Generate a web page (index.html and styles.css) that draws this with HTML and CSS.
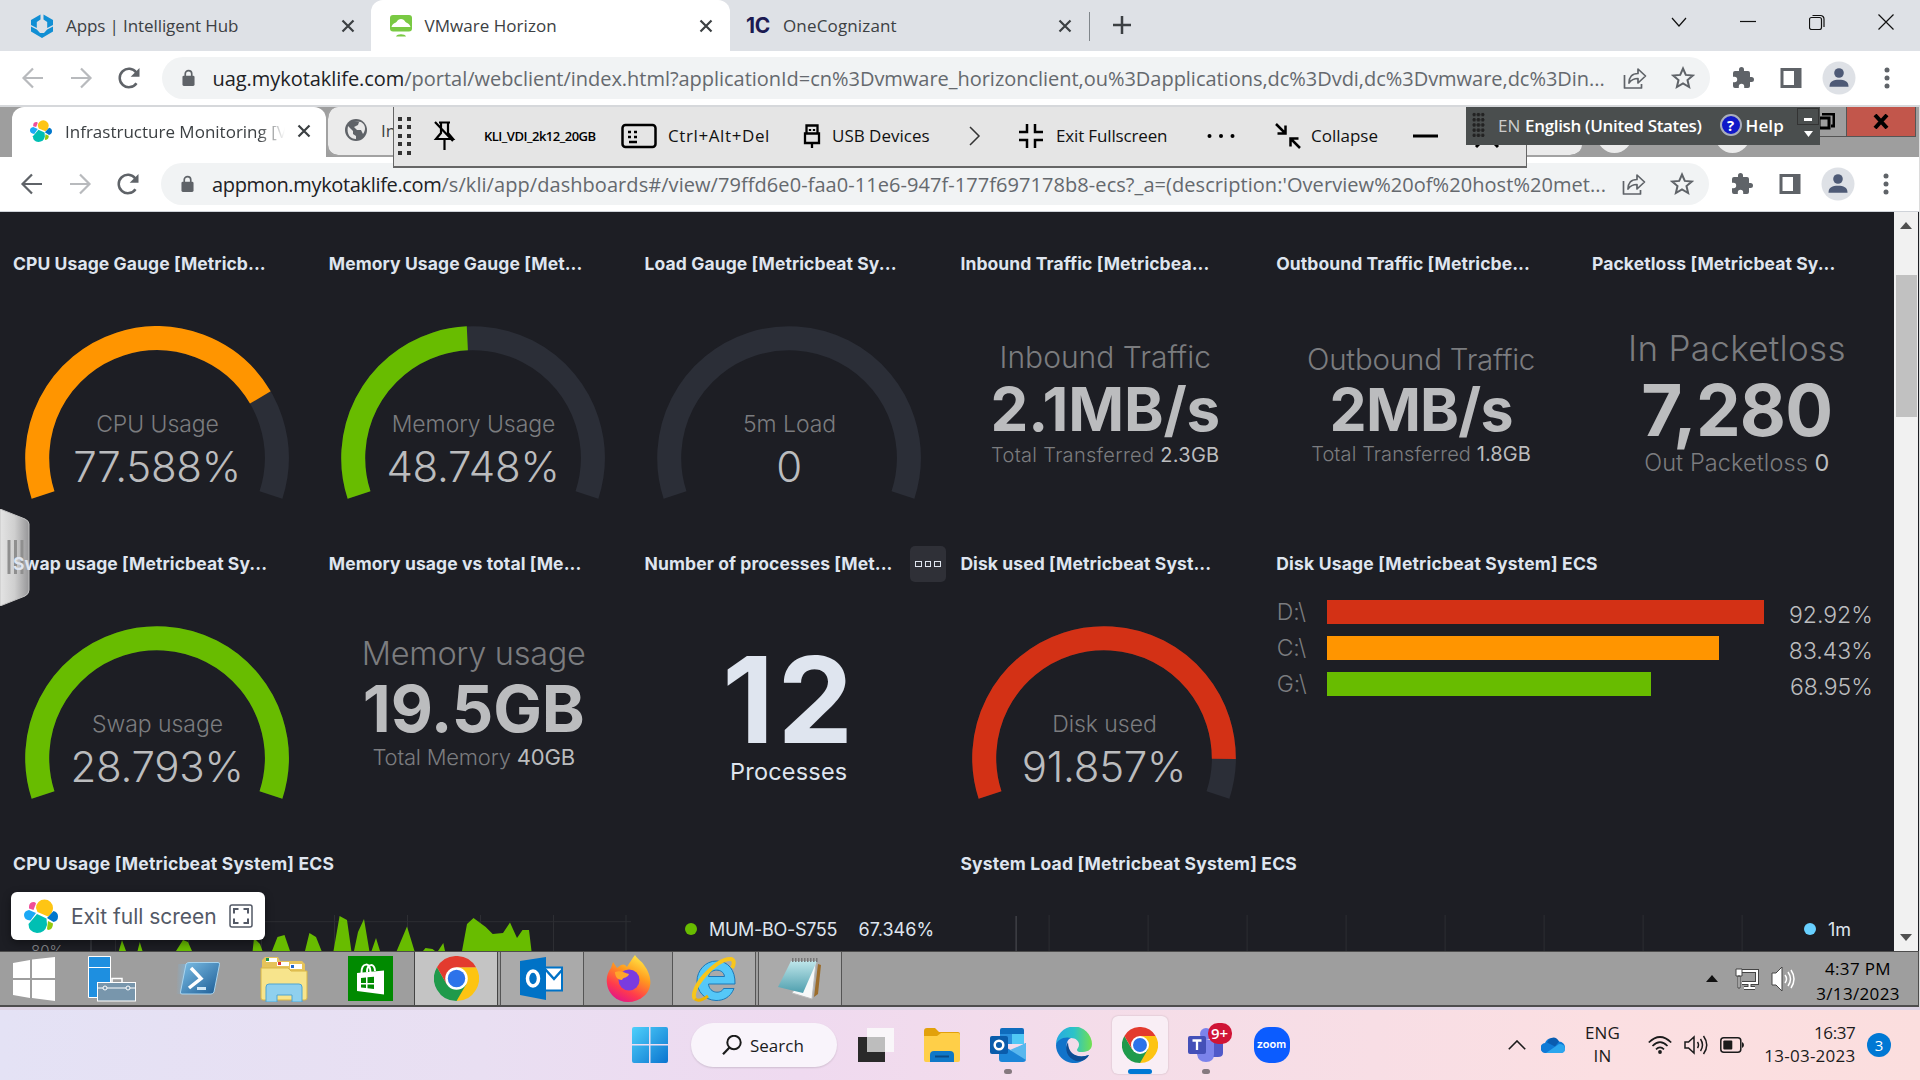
FILE: index.html
```html
<!DOCTYPE html>
<html lang="en">
<head>
<meta charset="utf-8">
<title>VMware Horizon</title>
<link rel="stylesheet" href="styles.css">
</head>
<body>
<svg class="defs" width="0" height="0">
  <symbol id="back" viewBox="0 0 24 24"><path d="M22 12H3M12 2.5L2.5 12l9.5 9.500" fill="none" stroke="currentColor" stroke-width="2.200"/></symbol>
  <symbol id="forward" viewBox="0 0 24 24"><path d="M2 12h19M12 2.500l9.500 9.500-9.500 9.500" fill="none" stroke="currentColor" stroke-width="2.200"/></symbol>
  <symbol id="reload" viewBox="0 0 24 24"><path d="M19.500 17.200A9.200 9.200 0 1 1 19.300 6.500" fill="none" stroke="currentColor" stroke-width="2.500"/><path d="M22.500 2v8.800h-8.800z" fill="currentColor"/></symbol>
  <symbol id="lock" viewBox="0 0 14 18"><rect x="0.500" y="6.500" width="13" height="11" rx="1.500" fill="currentColor"/><path d="M3.500 7V4.500a3.500 3.500 0 0 1 7 0V7" fill="none" stroke="currentColor" stroke-width="1.800"/></symbol>
  <symbol id="share" viewBox="0 0 24 24"><path d="M1.500 9v13h17v-4M6 17c0-6 3-9.500 9-9.500V3l7.500 7-7.500 7v-4.500c-4 0-6.500 1-9 4.500z" fill="none" stroke="currentColor" stroke-width="1.700" stroke-linejoin="round"/></symbol>
  <symbol id="star" viewBox="0 0 24 24"><path d="M12 2.500l2.800 6.400 7 .600-5.300 4.600 1.600 6.900-6.100-3.700-6.100 3.700 1.600-6.900L2.200 9.500l7-.600z" fill="none" stroke="currentColor" stroke-width="2"/></symbol>
  <symbol id="puzzle" viewBox="0 0 24 24"><path d="M20.500 11H19V7a2 2 0 0 0-2-2h-4V3.500a2.500 2.500 0 0 0-5 0V5H4a2 2 0 0 0-2 2v3.800h1.500a2.700 2.700 0 0 1 0 5.400H2V20a2 2 0 0 0 2 2h3.800v-1.500a2.700 2.700 0 0 1 5.400 0V22H17a2 2 0 0 0 2-2v-4h1.500a2.500 2.500 0 0 0 0-5z" fill="currentColor"/></symbol>
  <symbol id="panel" viewBox="0 0 24 24"><path d="M1.500 2h21v20h-21zM4.500 5v14H15V5z" fill="currentColor" fill-rule="evenodd"/></symbol>
  <symbol id="avatar" viewBox="0 0 34 34"><circle cx="17" cy="17" r="16.500" fill="#dee1e6"/><circle cx="17" cy="12" r="4.800" fill="#4e5a76"/><path d="M7.500 25.800c0-5.500 4-7 9.500-7s9.500 1.500 9.500 7z" fill="#4e5a76"/></symbol>
  <symbol id="kebab" viewBox="0 0 24 24"><g fill="currentColor"><circle cx="12" cy="4" r="2.500"/><circle cx="12" cy="12" r="2.500"/><circle cx="12" cy="20" r="2.500"/></g></symbol>
  <symbol id="x" viewBox="0 0 14 14"><path d="M1.500 1.500l11 11m0-11l-11 11" stroke="currentColor" stroke-width="2.200"/></symbol>
  <symbol id="elastic" viewBox="0 0 34 34"><path d="M12 9a8.500 8.500 0 0 1 17 0q0 5-5 8.500L13.500 13z" fill="#fec514"/><path d="M5 8q0-5 5-5 1.500 0 2 1.500L9.500 11 5 9.500z" fill="#f04e98"/><path d="M5 11l7 3-5.500 7.500Q0 21 0 16q0-4 5-5z" fill="#1ba9f5"/><path d="M13 15l9.500 4.500L23 26q-2 8-10 8-8.500-1-8.500-9z" fill="#00bfb3"/><path d="M29.500 12q4.500 1 4.500 5.500T29.500 23l-6.500-4z" fill="#0077cc"/><path d="M24 22l5 2.500q0 6-5 6.500l-1-1z" fill="#93c90e"/></symbol>
  <symbol id="chrome" viewBox="0 0 48 48"><path d="M24 24V12h20.800A24 24 0 0 1 24 48z" fill="#fdc412"/><path d="M24 24l10.400 6L24 48A24 24 0 0 1 3.200 12l10.400 18z" fill="#1f9a4b"/><path d="M3.200 12L13.600 30 24 24 24 12h20.800A24 24 0 0 0 3.200 12z" fill="#e33b2e"/><circle cx="24" cy="24" r="12" fill="#fff"/><circle cx="24" cy="24" r="9.300" fill="#2d73ea"/></symbol>
</svg>

<header class="tabstrip">
  <div class="tab tab--hub">
    <svg width="22" height="24" viewBox="0 0 22 24"><path d="M9.500.500v5L5.800 8v6L0 11V6zM12.500.500v5L16.200 8v6l5.800-3V6zM0 12.500l5.800 3L9 19h4l3.200-3.500 5.800-3v5L11 24 0 17.500z" fill="#118fd4"/></svg>
    <span class="tab-title t-hub">Apps | Intelligent Hub</span>
    <svg class="tab-close" width="14" height="14"><use href="#x"/></svg>
  </div>
  <div class="tab tab--active">
    <svg width="22" height="22" viewBox="0 0 22 22"><rect width="22" height="16.500" rx="3" fill="#79c943"/><path d="M1.500 12c1-4 4-4 5-5 2-4 7-4 9 0 1 1 4 1 5 5z" fill="#fff"/><path d="M6 21.500c1-3 9-3 10 0z" fill="#79c943"/></svg>
    <span class="tab-title t-vm">VMware Horizon</span>
    <svg class="tab-close" width="14" height="14"><use href="#x"/></svg>
  </div>
  <div class="tab tab--cog">
    <b class="cog">1C</b>
    <span class="tab-title t-one">OneCognizant</span>
    <svg class="tab-close" width="14" height="14"><use href="#x"/></svg>
  </div>
  <svg class="newtab" width="18" height="18" viewBox="0 0 18 18"><path d="M9 0v18M0 9h18" stroke="#3c4043" stroke-width="2.500"/></svg>
  <div class="win-controls">
    <svg width="16" height="16" viewBox="0 0 16 16"><path d="M1 4l7 8 7-8"/></svg>
    <svg width="16" height="16" viewBox="0 0 16 16"><path d="M0 7.500h16"/></svg>
    <svg width="16" height="16" viewBox="0 0 16 16"><rect x=".5" y="3.500" width="12" height="12" rx="2"/><path d="M3.500 1.500h8a3.500 3.500 0 0 1 3.500 3.500v8"/></svg>
    <svg width="16" height="16" viewBox="0 0 16 16"><path d="M.5.500l15 15m0-15l-15 15"/></svg>
  </div>
</header>

<nav class="toolbar">
  <div class="nav-icons"><svg class="dim"><use href="#back"/></svg><svg class="dim"><use href="#forward"/></svg><svg><use href="#reload"/></svg></div>
  <div class="omnibox">
    <svg class="lock"><use href="#lock"/></svg>
    <span class="url"><span class="host host-uag">uag.mykotaklife.com</span><span class="path-uag">/portal/webclient/index.html?applicationId=cn%3Dvmware_horizonclient,ou%3Dapplications,dc%3Dvdi,dc%3Dvmware,dc%3Din...</span></span>
    <svg><use href="#share"/></svg><svg><use href="#star"/></svg>
  </div>
  <div class="nav-actions"><svg><use href="#puzzle"/></svg><svg><use href="#panel"/></svg><svg class="avatar"><use href="#avatar"/></svg><svg><use href="#kebab"/></svg></div>
</nav>

<main class="remote">
  <div class="rtabs">
    <div class="rtab rtab--active">
      <svg width="22" height="22"><use href="#elastic"/></svg>
      <span class="tab-title t-infra">Infrastructure Monitoring [V</span>
      <svg class="tab-close" width="14" height="14"><use href="#x"/></svg>
    </div>
    <div class="rtab rtab--rest">
      <svg width="22" height="22" viewBox="0 0 22 22"><circle cx="11" cy="11" r="11" fill="#5f6368"/><path d="M3 7l5 5v3l3 2v3C6 20 1 16 3 7zM9 2l5 1-1 3-4 2 3 3 4 0 2 4c3-4 3-9-2-12z" fill="#e8e8e8"/></svg>
      <span class="tab-title">In</span>
    </div>
    <div class="rtab-tools"><i class="round"></i><i class="round"></i></div>
    <div class="rwin"><span class="rwin-restore"><svg width="18" height="18" viewBox="0 0 18 18"><path d="M5 1h12v12h-3M2 5h10v10H2z" fill="none" stroke="#000" stroke-width="3"/></svg></span><span class="rwin-close"><svg width="16" height="15" viewBox="0 0 16 15"><path d="M2 1l12 13M14 1L2 14" stroke="#000" stroke-width="4"/></svg></span></div>
  </div>

  <nav class="toolbar toolbar--remote">
    <div class="nav-icons"><svg><use href="#back"/></svg><svg class="dim"><use href="#forward"/></svg><svg><use href="#reload"/></svg></div>
    <div class="omnibox">
      <svg class="lock"><use href="#lock"/></svg>
      <span class="url"><span class="host host-app">appmon.mykotaklife.com</span><span class="path-app">/s/kli/app/dashboards#/view/79ffd6e0-faa0-11e6-947f-177f697178b8-ecs?_a=(description:'Overview%20of%20host%20met...</span></span>
      <svg><use href="#share"/></svg><svg><use href="#star"/></svg>
    </div>
    <div class="nav-actions"><svg><use href="#puzzle"/></svg><svg><use href="#panel"/></svg><svg class="avatar"><use href="#avatar"/></svg><svg><use href="#kebab"/></svg></div>
  </nav>

  <div class="page">
    <section class="dashboard">
      <article class="panel"><h2>CPU Usage Gauge [Metricb...</h2>
        <svg class="gauge" viewBox="0 0 264 176"><circle class="track" pathLength="360"/><circle class="arc orange" pathLength="360" stroke-dasharray="167.600 360"/><text class="g-label" x="132.500" y="106">CPU Usage</text><text class="g-value" x="132" y="156">77.588%</text></svg></article>
      <article class="panel"><h2>Memory Usage Gauge [Met...</h2>
        <svg class="gauge" viewBox="0 0 264 176"><circle class="track" pathLength="360"/><circle class="arc green" pathLength="360" stroke-dasharray="105.300 360"/><text class="g-label" x="132.500" y="106">Memory Usage</text><text class="g-value" x="132" y="156">48.748%</text></svg></article>
      <article class="panel"><h2>Load Gauge [Metricbeat Sy...</h2>
        <svg class="gauge" viewBox="0 0 264 176"><circle class="track" pathLength="360"/><text class="g-label" x="132.500" y="106">5m Load</text><text class="g-value" x="132" y="156">0</text></svg></article>
      <article class="panel"><h2>Inbound Traffic [Metricbea...</h2>
        <div class="metric m-in"><span class="m-label">Inbound Traffic</span><b class="m-value">2.1MB/s</b><span class="m-sub">Total Transferred <em>2.3GB</em></span></div></article>
      <article class="panel"><h2>Outbound Traffic [Metricbe...</h2>
        <div class="metric m-out"><span class="m-label">Outbound Traffic</span><b class="m-value">2MB/s</b><span class="m-sub">Total Transferred <em>1.8GB</em></span></div></article>
      <article class="panel"><h2>Packetloss [Metricbeat Sy...</h2>
        <div class="metric m-loss"><span class="m-label">In Packetloss</span><b class="m-value">7,280</b><span class="m-sub">Out Packetloss <em>0</em></span></div></article>

      <article class="panel"><h2>Swap usage [Metricbeat Sy...</h2>
        <svg class="gauge" viewBox="0 0 264 176"><circle class="track" pathLength="360"/><circle class="arc green" pathLength="360" stroke-dasharray="216 360"/><text class="g-label" x="132.500" y="106">Swap usage</text><text class="g-value" x="132" y="156">28.793%</text></svg></article>
      <article class="panel"><h2>Memory usage vs total [Me...</h2>
        <div class="metric m-mem"><span class="m-label">Memory usage</span><b class="m-value">19.5GB</b><span class="m-sub">Total Memory <em>40GB</em></span></div></article>
      <article class="panel"><h2>Number of processes [Met...</h2>
        <button class="panel-menu"><i></i><i></i><i></i></button>
        <div class="metric m-proc"><b class="m-value">12</b><span class="m-sub">Processes</span></div></article>
      <article class="panel"><h2>Disk used [Metricbeat Syst...</h2>
        <svg class="gauge" viewBox="0 0 264 176"><circle class="track" pathLength="360"/><circle class="arc red" pathLength="360" stroke-dasharray="198.400 360"/><text class="g-label" x="132.500" y="106">Disk used</text><text class="g-value" x="132" y="156">91.857%</text></svg></article>
      <article class="panel panel--2"><h2 class="full">Disk Usage [Metricbeat System] ECS</h2>
        <ul class="disks">
          <li><span>D:\</span><div class="bar"><i class="bg-red" style="width:100%"></i></div><em>92.92%</em></li>
          <li><span>C:\</span><div class="bar"><i class="bg-orange" style="width:89.8%"></i></div><em>83.43%</em></li>
          <li><span>G:\</span><div class="bar"><i class="bg-green" style="width:74.2%"></i></div><em>68.95%</em></li>
        </ul></article>

      <article class="panel panel--3"><h2 class="full">CPU Usage [Metricbeat System] ECS</h2>
        <div class="chart">
          <svg width="640" height="36" viewBox="0 915 640 36"><path d="M115.500 915v36M188.500 915v36M261.500 915v36M334.500 915v36M407.500 915v36M480.500 915v36M553.500 915v36M626 915v36M91 921.700H631" stroke="#2d2e33" fill="none"/><path d="M91 915v36" stroke="#45464c"/>
          <path fill="#68bc00" d="M118.800 951L122 940l4 11zM137.500 951l2.300-9 2.700 9zM176 951l7-11 5 2 4 9zM252.600 951l1.400-13 6 6 2.500 7zM272 951l5.500-14 7-2 5.500 16zM305 951l4.400-18 6.600 4 5.600 14zM333.500 951l6.100-35 7.400 4 4.400 31zM354 951l4-19 6-13 5.400 32zM371.500 951l4.500-13 4 13zM396.700 951L407 926.500l7.500 24.500zM423 951l2.500-3 7 1 2.500 2zM438 951l5.300-8 1.700 8zM462 951l5-27 6.500-6L485.700 927l7 7 10.300-1 7-10.500 7 15.500 5.500-8h6.500l2.500 21z"/>
          <text x="31" y="956" class="axis">80%</text></svg>
          <div class="legend legend--cpu"><i class="bg-green"></i><span>MUM-BO-S755</span><em>67.346%</em></div>
        </div></article>
      <article class="panel panel--3"><h2 class="full">System Load [Metricbeat System] ECS</h2>
        <div class="chart">
          <svg width="848" height="36" viewBox="947.400 915 848 36"><path d="M1049.500 915v36M1148.500 915v36M1247.500 915v36M1346.500 915v36M1445.500 915v36M1544.500 915v36M1643.500 915v36M1742.500 915v36" stroke="#2d2e33" fill="none"/><path d="M1016.500 916v35" stroke="#505157"/></svg>
          <div class="legend legend--load"><i></i><span>1m</span></div>
        </div></article>
    </section>
    <div class="scrollbar"><svg width="12" height="7" viewBox="0 0 12 7"><path d="M0 7h12L6 0z" fill="#505050"/></svg><i class="thumb"></i><svg width="12" height="7" viewBox="0 0 12 7"><path d="M0 0h12L6 7z" fill="#505050"/></svg></div>

    <svg class="handle" width="30" height="97" viewBox="0 0 30 97"><defs><linearGradient id="hg"><stop offset="0" stop-color="#e4e4e4"/><stop offset=".5" stop-color="#cfcfcf"/><stop offset="1" stop-color="#969698"/></linearGradient></defs><path d="M0 0l25 10q4 2 4 5v66q0 4-4 6L0 97z" fill="url(#hg)" stroke="#c4c4c4"/><path d="M9 31v34M15.500 31v34M22 31v34" stroke="#8f8f8f" stroke-width="3"/></svg>
    <button class="exit-full"><svg width="34" height="34"><use href="#elastic"/></svg><span>Exit full screen</span><svg width="24" height="24" viewBox="0 0 24 24" fill="none" stroke="#535966"><rect x="1" y="1" width="22" height="22" rx="2" stroke-width="1.500"/><path d="M5 9.500V5h4.500M14.500 5H19v4.500M19 14.500V19h-4.500M9.500 19H5v-4.500" stroke-width="2"/></svg></button>
  </div>

  <footer class="rtaskbar">
    <span class="rapp rapp--start"><svg width="44" height="44" viewBox="0 0 44 44"><path d="M1 6l17-3v18H1zM20 2.500L43 0v21H20zM1 23h17v18L1 38zM20 23h23v21l-23-3z" fill="#fff"/></svg></span>
    <span class="rapp"><svg width="48" height="46" viewBox="0 0 48 46"><path d="M.5.500h22v41H.500z" fill="#1e8fe0" stroke="#fff"/><path d="M0 11.500h22" stroke="#fff"/><path d="M24 26v-3.500h10V26" fill="none" stroke="#fff" stroke-width="1.500"/><rect x="9.500" y="26.500" width="38" height="18.500" fill="#7896ac" stroke="#fff"/><path d="M9 32h38" stroke="#fff"/><circle cx="17" cy="32" r="2" fill="#7896ac" stroke="#fff"/><circle cx="40" cy="32" r="2" fill="#7896ac" stroke="#fff"/></svg></span>
    <span class="rapp"><svg width="44" height="34" viewBox="0 0 44 34"><defs><linearGradient id="ps" x2="1" y2="1"><stop stop-color="#7dbfe6"/><stop offset="1" stop-color="#1c5c95"/></linearGradient><linearGradient id="pt"><stop stop-color="#7db4da" stop-opacity="0"/><stop offset="1" stop-color="#7db4da"/></linearGradient></defs><path d="M2 2h12l-6 30H0z" fill="url(#pt)"/><path d="M10 2q1-1.500 3-1.500h29q2 0 1.500 2L38 30q-1 2-3 2H6q-2 0-1.500-2z" fill="url(#ps)" stroke="#a8d4ee"/><path d="M15 6l10 10.500L13 26" fill="none" stroke="#fff" stroke-width="3.500"/><path d="M21 26.500h9" stroke="#cfe6f5" stroke-width="3"/></svg></span>
    <span class="rapp"><svg width="48" height="46" viewBox="0 0 48 46"><path d="M2 4l3-3h13l2 4h22l3 3v30H2z" fill="#e6c35a"/><path d="M6 2h11v4H6zM17 6h12v4H17zM30 8h12v5H30z" fill="#fff"/><path d="M6 2h3v3H6z" fill="#1a9a48"/><path d="M18 6h3v3h-3z" fill="#d33"/><path d="M31 9h3v3h-3z" fill="#26c"/><path d="M1 12h27l3 3h16v27q0 2-2 2H3q-2 0-2-2z" fill="#f7e48c" stroke="#d9b645"/><path d="M6 46V31q0-3 3-3h30q3 0 3 3v15H32v-7H17v7z" fill="#8fd0ee" stroke="#4fa4d2"/></svg></span>
    <span class="rapp"><svg width="45" height="45" viewBox="0 0 45 45"><path d="M0 0h45v45H0z" fill="#008a00"/><path d="M9 17l27-2.500v24L9 35z" fill="#fff"/><path d="M13.500 17c0-11 9-11 9-1M19 16c0-9 8-9 8-1" fill="none" stroke="#fff" stroke-width="2"/><path d="M13 22l5-.500V27h-5zM19.500 21.300l6.500-.600V27h-6.500zM13 28.500h5V32l-5-.600zM19.500 28.500H26V33l-6.500-.800z" fill="#008a00"/></svg></span>
    <span class="rapp rapp--active"><svg width="45" height="45"><use href="#chrome"/></svg></span>
    <span class="rapp rapp--open"><svg width="44" height="44" viewBox="0 0 44 44"><path d="M25 10.500h17v23H25z" fill="#fff" stroke="#0072c6" stroke-width="2"/><path d="M25 12l9 10 8-9" fill="none" stroke="#0072c6" stroke-width="2.500"/><path d="M0 4l26-4v43L0 38z" fill="#0072c6"/><ellipse cx="13" cy="21.500" rx="5.500" ry="7.500" fill="none" stroke="#fff" stroke-width="3.500"/></svg></span>
    <span class="rapp"><svg width="45" height="47" viewBox="0 0 45 47"><defs><linearGradient id="ff" x1=".8" y1="0" x2=".3" y2="1"><stop stop-color="#fff04a"/><stop offset=".4" stop-color="#ff9a1e"/><stop offset=".75" stop-color="#ff3b4c"/><stop offset="1" stop-color="#e31587"/></linearGradient></defs><path d="M29 0c3 5 7 6 9 10 9 12 8 24 0 31-9 8-23 8-31 0C-1 33-1 20 5 13l2-6 4 6 4-3c2-1 4-1 6 2 3-5 5-8 8-12z" fill="url(#ff)"/><circle cx="23" cy="25" r="10.500" fill="#7a3be0"/><path d="M9 17c6-2 9 1 14 2-1 4-6 3-7 6-4 0-7-3-7-8z" fill="#ffa52a"/></svg></span>
    <span class="rapp rapp--open"><svg width="46" height="46" viewBox="0 0 46 46"><path d="M44 28H17.500c1 10 13 10 15 4.500H43C39 42 32 44.500 25 44.500 13 44 6 35 6 25S14 5 25.500 5 44.500 14 44 28zM17.500 20.500h16c-1-8.500-14.500-8.500-16 0z" fill="#55c8f8" stroke="#1c78b8" fill-rule="evenodd"/><path d="M4 43C-3 35 24 2 40 3c4 1 3 6 1 9" fill="none" stroke="#f8c61c" stroke-width="4"/><path d="M4 43c4 3 9 0 13-3" fill="none" stroke="#f0b400" stroke-width="3"/></svg></span>
    <span class="rapp rapp--open"><svg width="44" height="44" viewBox="0 0 44 44"><defs><linearGradient id="np" x2="0" y2="1"><stop stop-color="#bfe6ea"/><stop offset="1" stop-color="#4f9fae"/></linearGradient></defs><path d="M40 7l3 1-3 29-4 3z" fill="#9c6d2c"/><path d="M38 6l-4 36-20-6 20-30z" fill="#f6f8f8" stroke="#bbb"/><path d="M13 4h26L25 36 0 30z" fill="url(#np)"/><path d="M14 3h26" stroke="#777" stroke-width="4" stroke-dasharray="1.500 1.500"/></svg></span>
    <div class="rtray">
      <svg width="12" height="7" viewBox="0 0 12 7"><path d="M0 7h12L6 0z" fill="#111"/></svg>
      <svg class="net" width="24" height="24" viewBox="0 0 24 24"><path d="M7 4h15v12H7M14.500 16v4.500M9 21h11" fill="none" stroke="#444" stroke-width="4"/><path d="M7 4h15v12H7M14.500 16v4.500M9 21h11" fill="none" stroke="#fff" stroke-width="2"/><path d="M1 2h6v7H1zM3 9h2v12H3z" fill="#fff" stroke="#444"/></svg>
      <svg class="vol" width="24" height="26" viewBox="0 0 24 26"><path d="M1 7h4l6-6v24l-6-6H1z" fill="#fff" stroke="#444"/><path d="M14 9q3 4 0 8M17 6q5 7 0 14M20 4q6 9 0 18" fill="none" stroke="#fff" stroke-width="1.500"/></svg>
      <div class="rclock"><span>4:37 PM</span><span class="rdate">3/13/2023</span></div>
    </div>
  </footer>

  <div class="horizon-bar">
    <i class="hgrip"></i>
    <svg width="24" height="32" viewBox="0 0 24 32"><path d="M7 2.500h11M9 3v10l-5 6h17l-5-6V3M12.500 19v11M3 2l18 19" fill="none" stroke="#000" stroke-width="2.200"/></svg>
    <b>KLI_VDI_2k12_20GB</b>
    <svg width="36" height="26" viewBox="0 0 36 26"><rect x="1.500" y="2" width="33" height="22" rx="3" fill="none" stroke="#000" stroke-width="2.500"/><path d="M7 9h3M13 9h3M7 14h3M13 14h3M8 19h8" stroke="#000" stroke-width="2.500"/></svg>
    <span class="h-cad">Ctrl+Alt+Del</span>
    <svg width="20" height="26" viewBox="0 0 20 26"><path d="M4.500 10V2.500h11V10M3 10.500h14V20H3zM10 20v5M8 6v2M12 6v2" fill="none" stroke="#000" stroke-width="2.300"/></svg>
    <span>USB Devices</span>
    <svg width="16" height="20" viewBox="0 0 16 20"><path d="M4 1l9 9-9 9" fill="none" stroke="#333" stroke-width="1.500"/></svg>
    <svg width="26" height="26" viewBox="0 0 26 26"><path d="M9 1v8H1M17 1v8h8M9 25v-8H1M17 25v-8h8" fill="none" stroke="#000" stroke-width="2.500"/></svg>
    <span class="h-exit">Exit Fullscreen</span>
    <svg width="28" height="6" viewBox="0 0 28 6"><circle cx="2.500" cy="3" r="2"/><circle cx="14" cy="3" r="2"/><circle cx="25.500" cy="3" r="2"/></svg>
    <svg width="26" height="26" viewBox="0 0 26 26"><path d="M1 1l9 9M10.500 2.500v8h-8M25 25l-9-9M15.500 23.500v-8h8" fill="none" stroke="#000" stroke-width="2.500"/></svg>
    <span>Collapse</span>
    <svg width="25" height="4" viewBox="0 0 25 4"><path d="M0 2h25" stroke="#000" stroke-width="3"/></svg>
    <svg width="26" height="26" viewBox="0 0 26 26"><path d="M2 2l22 22M24 2L2 24" stroke="#000" stroke-width="3"/></svg>
  </div>
  <div class="lang-bar">
    <i class="lgrip"></i>
    <span class="l-en">EN</span><b>English (United States)</b>
    <i class="help">?</i><b class="l-help">Help</b>
    <span class="l-opts"><i class="l-min"></i><svg width="9" height="6" viewBox="0 0 9 6"><path d="M0 0h9L4.500 6z" fill="#fff"/></svg></span>
  </div>
</main>

<footer class="taskbar">
  <div class="apps">
    <svg class="app" width="36" height="36" viewBox="0 0 36 36"><defs><linearGradient id="w11" x2="1" y2="1"><stop stop-color="#4fd0fb"/><stop offset="1" stop-color="#0a74cf"/></linearGradient></defs><path d="M2 0h15v17H0V2q0-2 2-2zM18.500 0H34q2 0 2 2v15H18.500zM0 18.500h17V36H2q-2 0-2-2zM18.500 18.500H36V34q0 2-2 2H18.500z" fill="url(#w11)"/></svg>
    <div class="search"><svg width="20" height="20" viewBox="0 0 20 20"><circle cx="12" cy="7.500" r="6.700" fill="none" stroke="#1b1b1b" stroke-width="2"/><path d="M7.500 12.500L1 19.200" stroke="#1b1b1b" stroke-width="2.200"/></svg><span>Search</span></div>
    <span class="slot"><svg width="36" height="36" viewBox="0 0 36 36"><path d="M0 10h27v25H0z" fill="#2a2a2a"/><path d="M9 1h27v24H9z" fill="#fafafa" opacity=".85"/><path d="M9 10h18v15H9z" fill="#bdbdbd"/></svg></span>
    <span class="slot"><svg width="36" height="34" viewBox="0 0 36 34"><path d="M0 3q0-3 3-3h8l4 4h19q2 0 2 2v10H0z" fill="#e2a10b"/><path d="M0 8h13l4-3h17q2 0 2 2v25q0 2-2 2H2q-2 0-2-2z" fill="#ffcf48"/><path d="M6 34V27q0-4 4-4h16q4 0 4 4v7z" fill="#0f78c8"/><path d="M11 28.500h14" stroke="#0a4a86" stroke-width="2"/></svg></span>
    <span class="slot slot--dot"><svg width="36" height="34" viewBox="0 0 36 34"><path d="M10 2q0-2 2-2h20q2 0 2 2v14H10z" fill="#0f6cbd"/><path d="M10 6h12v10H10z" fill="#2a8fdd"/><path d="M22 6h12v10H22z" fill="#50c8f5"/><path d="M9 15l13 8 14-8v16q0 3-3 3H12q-3 0-3-3z" fill="#1c86d8"/><path d="M36 15v17L20 22z" fill="#58b7ee"/><rect y="8" width="18" height="18" rx="2" fill="#0a5cab"/><circle cx="9" cy="17" r="4.300" fill="none" stroke="#fff" stroke-width="2.500"/></svg></span>
    <span class="slot"><svg width="36" height="36" viewBox="0 0 36 36"><defs><linearGradient id="eg"><stop stop-color="#27a9e2"/><stop offset=".5" stop-color="#2cc3c8"/><stop offset="1" stop-color="#72e04f"/></linearGradient></defs><path d="M0 18A18 18 0 0 1 36 17c0 7-6 8-11 8-4 0-5-2-3-4 3-5-1-10-7-10C7 11 2 14 0 18z" fill="url(#eg)"/><path d="M0 18c1-5 8-9 15-7-6 2-6 12 1 16 5 3 12 3 17 1A18 18 0 0 1 0 18z" fill="#1173ca"/><path d="M12 15c-4 7-1 16 8 19 6 1 11-2 13-6-10 4-21 0-21-13z" fill="#0d4d94"/></svg></span>
    <span class="slot slot--active"><svg width="36" height="36"><use href="#chrome"/></svg></span>
    <span class="slot slot--dot"><svg width="36" height="34" viewBox="0 0 36 34"><circle cx="18" cy="6" r="6" fill="#7b83eb"/><circle cx="30" cy="9" r="4" fill="#5059c9"/><path d="M24 13h11v12q0 4-5 4h-6z" fill="#5059c9"/><path d="M9 12h17v14q0 8-8 8t-9-8z" fill="#7b83eb"/><rect y="8" width="18" height="18" rx="2" fill="#4450b8"/><path d="M4.500 12.500h9M9 12.500V22" stroke="#fff" stroke-width="2.300"/></svg><b class="count">9+</b></span>
    <span class="slot"><i class="zoom">zoom</i></span>
  </div>
  <div class="tray">
    <svg width="18" height="10" viewBox="0 0 18 10"><path d="M.8 9.200L9 1l8.200 8.200" fill="none" stroke="#1b1b1b" stroke-width="1.600"/></svg>
    <svg class="cloud" width="24" height="16" viewBox="0 0 24 16"><path d="M5 16a5 5 0 0 1-1-10 8 8 0 0 1 14-1.500A6 6 0 0 1 24 11q0 5-5 5z" fill="#0f7ad6"/><path d="M5 16l13-9q6 0 6 5 0 4-4 4z" fill="#2ba6ee"/><path d="M8 2.500q6-5 10 2l-4 5-8-4z" fill="#0a5cb0"/></svg>
    <div class="lang"><span>ENG</span><span>IN</span></div>
    <svg class="wifi" width="24" height="18" viewBox="0 0 24 18"><path d="M.8 6.500q11.200-11 22.400 0M4.500 10q7.500-7.500 15 0M8 13.300q4-4 8 0" fill="none" stroke="#1b1b1b" stroke-width="1.700"/><circle cx="12" cy="16" r="1.900" fill="#1b1b1b"/></svg>
    <svg class="wvol" width="24" height="20" viewBox="0 0 24 20"><path d="M1 7h3.500L10 2v16l-5.500-5H1zM13.500 7q2 3 0 6M16.500 4q4 6 0 12M19.500 1q6.500 9 0 18" fill="none" stroke="#1b1b1b" stroke-width="1.500"/></svg>
    <svg class="batt" width="24" height="16" viewBox="0 0 24 16"><rect x=".8" y=".8" width="20" height="14.400" rx="3" fill="none" stroke="#1b1b1b" stroke-width="1.500"/><rect x="3.300" y="3.500" width="9" height="9" rx="1" fill="#1b1b1b"/><path d="M22 5v6q2-1 2-3t-2-3z" fill="#1b1b1b"/></svg>
    <div class="clock"><span class="time">16:37</span><span class="date">13-03-2023</span></div>
    <i class="notif">3</i>
  </div>
</footer>
</body>
</html>
```
FILE: styles.css
```css
* { box-sizing: border-box; }
html, body { margin: 0; width: 1920px; height: 1080px; overflow: hidden; }
body { display: flex; flex-direction: column; background: #fff; font: 17px "Open Sans", "Noto Sans", sans-serif; color: #3c4043; }
svg { display: block; flex: none; }
.defs { position: absolute; }
i, em { font-style: normal; }
span, b, text { white-space: nowrap; }
button { font: inherit; border: 0; padding: 0; }

/* outer browser */
.tabstrip { display: flex; height: 51px; background: #dee1e6; flex: none; }
.tab { display: flex; align-items: center; height: 51px; }
.tab-title { margin-left: 14px; flex: 1; }
.tab-close { color: #3c4043; }
.tab--hub { width: 371px; padding: 0 16px 0 31px; }
.tab--active { width: 359px; padding: 0 17px 0 19px; background: #fff; border-radius: 12px 12px 0 0; }
.tab--cog { width: 360px; padding: 0 18px 0 16px; position: relative; }
.tab--cog::after { content: ""; position: absolute; right: 0; top: 12px; width: 1px; height: 29px; background: #80868b; }
.cog { width: 25px; font: 700 21px "Inter", sans-serif; letter-spacing: -.3px; color: #1c1a52; }
.t-hub { letter-spacing: -.1px; margin-left: 13px; }
.t-vm { letter-spacing: .04px; margin-left: 12.500px; }
.t-one { letter-spacing: .15px; margin-left: 12px; }
.newtab { margin: 16px 0 0 22.500px; }
.win-controls { display: flex; gap: 53px; margin: 14px 26px 0 auto; fill: none; stroke: #111; stroke-width: 1.200; }

.toolbar { display: flex; align-items: center; height: 54px; background: #fff; flex: none; color: #5f6368; }
.toolbar svg { width: 24px; height: 24px; }
.nav-icons { display: flex; gap: 24px; width: 162px; padding-left: 21px; }
.dim { color: #b8babd; }
.omnibox { display: flex; align-items: center; width: 1548px; height: 42px; border-radius: 21px; background: #f1f3f4; padding: 0 15px 0 20px; }
.omnibox .lock { width: 13px; height: 18px; margin-top: -1px; }
.omnibox svg + svg { margin-left: 24px; }
.url { flex: 1; margin-left: 17.500px; padding-top: 1px; font-size: 20px; line-height: 28px; color: #65696e; }
.host { color: #202124; }
.host-uag { letter-spacing: -.05px; }
.path-uag { letter-spacing: -.03px; }
.host-app { letter-spacing: -.34px; }
.path-app { letter-spacing: .06px; }
.nav-actions { display: flex; align-items: center; gap: 24px; padding-left: 21px; }
.toolbar .avatar { width: 34px; height: 34px; margin: 0 -5px; }

/* remote session */
.remote { position: relative; display: flex; flex-direction: column; height: 902px; border-top: 2px solid #d6d8db; border-right: 1px solid #dcdcdc; flex: none; }
.rtabs { display: flex; height: 50px; background: #9e9e9e; flex: none; }
.rtab { display: flex; align-items: center; padding-bottom: 2px; }
.rtab--active { width: 314px; margin-left: 12px; padding: 0 15px 2px 18px; background: #fff; border-radius: 12px 12px 0 0; }
.t-infra { overflow: hidden; margin: 0 12px 0 13px; -webkit-mask-image: linear-gradient(90deg, #000 88%, transparent); mask-image: linear-gradient(90deg, #000 88%, transparent); }
.rtab--rest { width: 1256px; padding-left: 17px; background: #ebebeb; border: 2px solid #a2a2a2; border-width: 0 0 2px 2px; border-radius: 12px 0 12px 12px; background-clip: padding-box; }
.rtab-tools { display: flex; gap: 83px; padding: 11px 0 0 15px; }
.round { width: 35px; height: 35px; border-radius: 50%; background: #ebebeb; }
.rwin { display: flex; height: 30px; margin-left: auto; padding-right: 3px; }
.rwin-restore { width: 28px; border: 1px solid #555; border-top: 0; border-left: 0; padding-top: 6px; }
.rwin-restore svg { margin-left: -2px; }
.rwin-close { display: flex; align-items: center; justify-content: center; width: 69px; background: #c2564b; border: 1px solid #555; border-width: 0 1px 1px 0; color: #000; }
.toolbar--remote .nav-icons { padding-left: 20px; width: 161px; }
.toolbar--remote .url { margin-left: 18px; padding-top: 2px; }

.page { position: relative; display: flex; height: 740px; border-top: 1px solid #cfd3d9; background: #1d1e24; flex: none; overflow: hidden; }
.dashboard { display: grid; grid-template-columns: repeat(6, 315.800px); grid-auto-rows: 300px; width: 1894px; padding-top: 27px; font-family: "Inter", "Open Sans", sans-serif; flex: none; }
.panel { position: relative; }
.panel--2 { grid-column: span 2; }
.panel--3 { grid-column: span 3; }
.panel h2 { position: relative; z-index: 2; margin: 0; padding-left: 13px; font-size: 17.500px; line-height: 50px; height: 50px; font-weight: 700; letter-spacing: .09px; color: #dfe5ef; white-space: nowrap; }
.panel h2.full { letter-spacing: .2px; }
.gauge { width: 264px; height: 176px; margin: 37px 0 0 25px; }
.gauge circle { cx: 132px; cy: 132px; r: 119.800px; fill: none; stroke-width: 24px; transform: rotate(162deg); transform-origin: 132px 132px; }
.track { stroke: #2b2e37; stroke-dasharray: 216 360; }
.orange { stroke: #ff9500; }
.green { stroke: #68bc00; }
.red { stroke: #d33115; }
.g-label { font-size: 23px; fill: #7b7c7f; text-anchor: middle; letter-spacing: -.05px; font-weight: 300; }
.g-value { font-size: 42px; fill: #bbbcbe; text-anchor: middle; letter-spacing: -.25px; font-weight: 350; }

.metric { display: flex; flex-direction: column; align-items: center; color: #bbbcbe; }
.m-label { color: #7b7c7f; font-weight: 300; }
.m-sub { color: #7b7c7f; font-weight: 300; }
.m-sub em { color: #bbbcbe; font-weight: 400; }
.m-value { font-weight: 700; }
.m-in { padding-top: 50px; }
.m-in .m-label { font-size: 30px; line-height: 36px; letter-spacing: 0; }
.m-in .m-value { font-size: 60px; line-height: 60px; margin: 4px 0; letter-spacing: -.2px; }
.m-in .m-sub { font-size: 20px; line-height: 24px; letter-spacing: .3px; }
.m-out { padding-top: 52px; }
.m-out .m-label { font-size: 29.500px; line-height: 36px; letter-spacing: -.2px; }
.m-out .m-value { font-size: 59px; line-height: 60px; margin: 2.500px 0; letter-spacing: -.8px; }
.m-out .m-sub { font-size: 20px; line-height: 24px; letter-spacing: .1px; }
.m-loss { padding-top: 38px; }
.m-loss .m-label { font-size: 35px; line-height: 42px; letter-spacing: .3px; }
.m-loss .m-value { font-size: 71px; line-height: 70px; margin: 6px 0 4px; letter-spacing: -.77px; }
.m-loss .m-sub { font-size: 23.500px; line-height: 28px; letter-spacing: .1px; }
.m-mem { padding-top: 45.500px; }
.m-mem .m-label { font-size: 32.500px; line-height: 38px; letter-spacing: -.3px; }
.m-mem .m-value { font-size: 65px; line-height: 64px; margin: 4px 0 3px; letter-spacing: -.2px; }
.m-mem .m-sub { font-size: 22px; line-height: 26px; letter-spacing: -.2px; }
.m-proc { padding-top: 52.500px; color: #dfe5ef; }
.m-proc .m-value { font-size: 120px; line-height: 116px; letter-spacing: 3.500px; }
.m-proc .m-sub { font-size: 23.500px; line-height: 28px; letter-spacing: .2px; margin-right: 1.500px; color: #dfe5ef; font-weight: 400; }
.panel-menu { position: absolute; right: 1.500px; top: 7px; display: flex; align-items: center; justify-content: center; gap: 3px; width: 36px; height: 36px; border-radius: 5px; background: #2f3037; }
.panel-menu i { width: 6.500px; height: 6.500px; border: 1.500px solid #dfe5ef; }

.disks { list-style: none; margin: 11px 22px 0 13.500px; padding: 0; display: flex; flex-direction: column; gap: 12px; }
.disks li { display: flex; height: 24px; font-size: 23px; line-height: 24px; color: #7b7c7f; font-weight: 300; }
.disks span { width: 50.300px; letter-spacing: -.1px; }
.bar { width: 437px; height: 24px; flex: none; }
.bar i { display: block; height: 24px; }
.disks em { flex: 1; text-align: right; color: #bbbcbe; padding-top: 3px; white-space: nowrap; }
.bg-red { background: #d33115; }
.bg-orange { background: #ff9500; }
.bg-green { background: #68bc00; }

.chart { display: flex; margin-top: 26px; }
.axis { font: 300 15px "Inter"; fill: #8a8b8f; }
.legend { display: flex; align-items: center; height: 28px; font-size: 18px; color: #dfe5ef; }
.legend i { width: 12px; height: 12px; border-radius: 50%; }
.legend--cpu { margin-left: 45px; letter-spacing: -.3px; }
.legend--cpu span { margin-left: 12px; width: 149.500px; }
.legend--cpu em { letter-spacing: .05px; }
.legend--load { margin-left: 8.500px; }
.legend--load i { background: #68d0ff; margin-right: 12px; }

.scrollbar { display: flex; flex-direction: column; align-items: center; width: 24px; height: 739px; background: #f1f1f1; padding: 10px 0; }
.thumb { width: 21px; height: 142px; margin: 46px 0 auto; background: #c1c1c1; }
.handle { position: absolute; left: 0; top: 297px; z-index: 1; }
.exit-full { position: absolute; left: 11px; top: 680px; z-index: 3; display: flex; align-items: center; width: 254px; height: 48px; padding: 0 12px 0 13px; border-radius: 6px; background: #fff; color: #535966; font: 400 21px "Inter"; box-shadow: 0 3px 8px #0006; }
.exit-full span { flex: 1; text-align: left; margin-left: 13px; }

.rtaskbar { display: flex; height: 56px; background: #9e9e9e; border: 1px solid #4d4d4d; border-width: 1px 1px 2px 0; flex: none; }
.rapp { display: flex; align-items: center; justify-content: center; width: 84px; margin-right: 2px; border: 1px solid transparent; border-width: 0 1px; }
.rapp--start { width: 68px; }
.rapp--active { background: #c4c4c4; border-color: #444; }
.rapp--open { background: #aaa; border-color: #555; }
.rtray { display: flex; align-items: center; margin-left: auto; color: #000; }
.rtray .net { margin-left: 17px; }
.rtray .vol { margin-left: 12px; }
.rclock { display: flex; flex-direction: column; align-items: center; width: 84px; margin: 0 18px 0 21px; line-height: 25px; letter-spacing: .35px; padding-top: 4px; }

/* session control bar */
.horizon-bar { position: absolute; left: 393px; top: 0; z-index: 5; display: grid; grid-template-columns: 34px 52px 137px 47px 134px 30px 134px 52px 38px 151px 68px 36px 102px 61px 30px; align-items: center; width: 1134px; height: 61px; padding: 0 0 2px 4px; background: #e5e5e5; border: 1px solid #666; border-width: 0 1px 2px; color: #111; }
.horizon-bar b { font-size: 13px; font-weight: 600; letter-spacing: -.5px; color: #000; }
.horizon-bar .h-cad { letter-spacing: .6px; }
.horizon-bar .h-exit { letter-spacing: -.15px; }
.hgrip { width: 13px; height: 38px; background: repeating-linear-gradient(#333 0 4px, #e5e5e5 4px 8.500px); position: relative; }
.hgrip::after { content: ""; position: absolute; left: 4px; top: 0; width: 5px; height: 38px; background: #e5e5e5; }

.lang-bar { position: absolute; left: 1466px; top: 0; z-index: 6; display: flex; align-items: center; width: 354px; height: 38px; padding: 0 0 2px 6px; background: #4a4e4e; color: #fff; }
.lang-bar b { font-weight: 600; letter-spacing: -.32px; }
.lgrip { width: 13px; height: 26px; background: radial-gradient(circle, #222 1.500px, transparent 2px) 0 0 / 4.300px 5.200px; }
.l-en { width: 27px; margin-left: 13px; color: #ccc; }
.help { display: flex; align-items: center; justify-content: center; width: 22px; height: 22px; margin: 0 4px 0 18px; border-radius: 50%; border: 2px solid #a9aebc; background: #1018c8; font: 700 15px "Open Sans"; }
.lang-bar .l-help { letter-spacing: .1px; }
.l-opts { display: flex; flex-direction: column; align-items: center; gap: 6px; align-self: flex-start; margin: 1px 1px 0 auto; }
.l-min { width: 22px; height: 17px; border: 1px solid #333; padding: 9px 6px 0; }
.l-min::after { content: ""; display: block; height: 3px; background: #fff; }

/* host taskbar */
.taskbar { display: flex; position: relative; height: 73px; background: linear-gradient(90deg, #e4e2f5 0, #e9dff2 480px, #efdaf0 800px, #f5dde8 1150px, #fbdfe2 1600px, #fbdede); border-top: 3px solid #ddd3e4; flex: none; color: #1b1b1b; }
.apps { display: flex; align-items: center; padding: 0 0 0 632px; }
.search { display: flex; align-items: center; width: 146px; height: 44px; margin: 0 6px 0 22.500px; padding-left: 31.500px; gap: 8px; border-radius: 22px; background: #f9f4fb; box-shadow: 0 1px 2px #0002; }
.slot { position: relative; display: flex; align-items: center; justify-content: center; width: 56px; height: 58px; margin: 0 5px; border-radius: 6px; }
.slot--active { background: #f9eef5; box-shadow: 0 0 2px #0003; }
.slot--active::after, .slot--dot::after { content: ""; position: absolute; bottom: 0; left: 16px; width: 24px; height: 5px; border-radius: 3px; background: #0078d4; }
.slot--dot::after { left: 24px; width: 8px; background: #85797f; }
.count { position: absolute; left: 30px; top: 7px; width: 24px; height: 21px; border-radius: 10px; background: #d01436; color: #fff; font-size: 15px; font-weight: 600; line-height: 20px; text-align: center; }
.zoom { width: 36px; height: 36px; border-radius: 15px; background: #0b5cff; color: #fff; font: 600 11px/34px "Inter"; text-align: center; }
.tray { display: flex; align-items: center; margin-left: auto; padding: 0 29px 1px 0; }
.cloud { margin-left: 15px; }
.lang { display: flex; flex-direction: column; align-items: center; width: 40px; margin: 0 25px 0 18px; line-height: 22.500px; }
.lang span { letter-spacing: .2px; }
.wvol, .batt { margin-left: 12px; }
.clock { display: flex; flex-direction: column; align-items: flex-end; width: 100px; margin: -2px 11.500px 0 12px; line-height: 23px; }
.time { letter-spacing: -.35px; }
.date { letter-spacing: .25px; }
.notif { width: 24px; height: 24px; border-radius: 50%; background: #0078d4; color: #fff; font-size: 15px; line-height: 24px; text-align: center; }
```
